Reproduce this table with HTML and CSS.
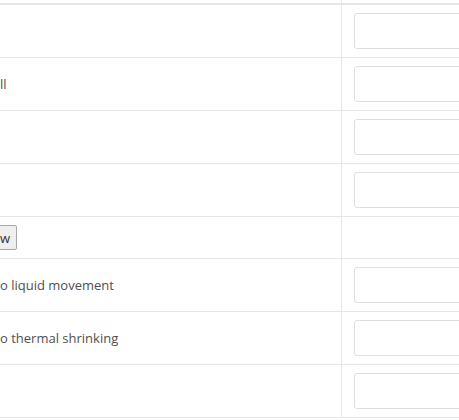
FILE: index.html
```html
<!DOCTYPE html>
<html>
<head>
<meta charset="utf-8">
<link rel="stylesheet" href="styles.css">
</head>
<body>
<table class="grid">
  <colgroup><col class="col-label"><col class="col-value"></colgroup>
  <thead>
    <tr><th class="label"></th><th class="value"></th></tr>
  </thead>
  <tbody>
    <tr><td class="label"></td><td class="value"><input class="field" type="text"></td></tr>
    <tr><td class="label"><span class="txt">ll</span></td><td class="value"><input class="field" type="text"></td></tr>
    <tr><td class="label"></td><td class="value"><input class="field" type="text"></td></tr>
    <tr><td class="label"></td><td class="value"><input class="field" type="text"></td></tr>
    <tr class="btn-row"><td class="label"><button class="btn" type="button">w</button></td><td class="value"></td></tr>
    <tr><td class="label"><span class="txt">o liquid movement</span></td><td class="value"><input class="field" type="text"></td></tr>
    <tr><td class="label"><span class="txt">o thermal shrinking</span></td><td class="value"><input class="field" type="text"></td></tr>
    <tr><td class="label"></td><td class="value"><input class="field" type="text"></td></tr>
  </tbody>
</table>
</body>
</html>
```

FILE: styles.css
```css
html, body {
  margin: 0;
  padding: 0;
  overflow: hidden;
  background: #fff;
}
body {
  font-family: "Open Sans", "DejaVu Sans", sans-serif;
  font-size: 13px;
  line-height: 20px;
  color: #4f4f4f;
}
.grid {
  border-collapse: collapse;
  table-layout: fixed;
  width: 580px;
  margin-top: -31px;
}
.col-label { width: 341px; }
.grid th {
  height: 34px;
  padding: 0;
  border-bottom: 2px solid #e6e6e6;
}
.grid td {
  padding: 8px 0;
  border-top: 1px solid #e6e6e6;
  border-bottom: 1px solid #e6e6e6;
  vertical-align: middle;
}
.grid .value {
  border-left: 1px solid #e8e8e8;
}
.grid td.value {
  padding: 8px 12px;
}
.txt {
  display: inline-block;
  white-space: nowrap;
}
.field {
  display: block;
  box-sizing: border-box;
  width: 100%;
  height: 36px;
  margin: 0;
  border: 1px solid #dedede;
  border-radius: 3px;
  background: #fff;
}
.btn {
  display: block;
  box-sizing: border-box;
  height: 25px;
  margin-left: -21px;
  padding: 0 6px 0 20px;
  font-family: "Open Sans", "DejaVu Sans", sans-serif;
  font-size: 13px;
  color: #333;
  background: #efefef;
  border: 1px solid #a9a9a9;
  border-radius: 2px;
}
```
